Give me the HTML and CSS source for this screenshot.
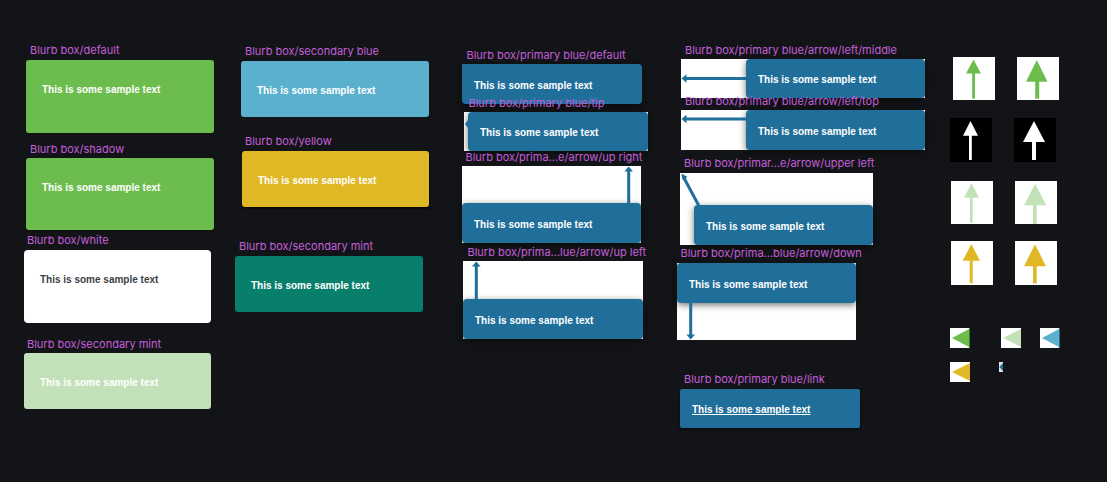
FILE: index.html
```html
<!DOCTYPE html>
<html>
<head>
<meta charset="utf-8">
<link rel="stylesheet" href="styles.css">
</head>
<body>
<div class="canvas">
  <!-- column 1 -->
  <div class="label l1">Blurb box/default</div>
  <div class="blurb green b-default"><span class="txt">This is some sample text</span></div>
  <div class="label l2">Blurb box/shadow</div>
  <div class="blurb green shadowed b-shadow"><span class="txt">This is some sample text</span></div>
  <div class="label l3">Blurb box/white</div>
  <div class="blurb white b-white"><span class="txt">This is some sample text</span></div>
  <div class="label l4">Blurb box/secondary mint</div>
  <div class="blurb lightmint b-lmint"><span class="txt">This is some sample text</span></div>

  <!-- column 2 -->
  <div class="label l5">Blurb box/secondary blue</div>
  <div class="blurb secblue b-secblue"><span class="txt">This is some sample text</span></div>
  <div class="label l6">Blurb box/yellow</div>
  <div class="blurb yellow b-yellow"><span class="txt">This is some sample text</span></div>
  <div class="label l7">Blurb box/secondary mint</div>
  <div class="blurb darkmint b-dmint"><span class="txt">This is some sample text</span></div>

  <!-- column 3 -->
  <div class="pb b-pdefault"><span class="txt">This is some sample text</span></div>
  <div class="label l8">Blurb box/primary blue/default</div>

  <div class="frame tipframe f-tip">
    <div class="pb pb-fill tipbox"><span class="tipmark"></span><span class="txt">This is some sample text</span></div>
  </div>
  <div class="label l9">Blurb box/primary blue/tip</div>

  <div class="label l10">Blurb box/prima...e/arrow/up right</div>
  <div class="frame col-end f-upright">
    <svg class="arrow" width="179" height="77" viewBox="0 0 179 77"><line x1="166.7" y1="40" x2="166.7" y2="4" stroke="#1f6f9a" stroke-width="3"/><polygon points="166.7,0.5 171,5.5 162.4,5.5" fill="#1f6f9a"/></svg>
    <div class="pb"><span class="txt">This is some sample text</span></div>
  </div>

  <div class="label l11">Blurb box/prima...lue/arrow/up left</div>
  <div class="frame col-end f-upleft">
    <svg class="arrow" width="180" height="78" viewBox="0 0 180 78"><line x1="13.3" y1="40" x2="13.3" y2="4" stroke="#1f6f9a" stroke-width="3"/><polygon points="13.3,0.5 17.6,5.5 9,5.5" fill="#1f6f9a"/></svg>
    <div class="pb"><span class="txt">This is some sample text</span></div>
  </div>

  <!-- column 4 -->
  <div class="label l12">Blurb box/primary blue/arrow/left/middle</div>
  <div class="frame row-end f-lmid">
    <svg class="arrow" width="244" height="39" viewBox="0 0 244 39"><line x1="4" y1="19.5" x2="66" y2="19.5" stroke="#1f6f9a" stroke-width="3"/><polygon points="0.5,19.5 5.5,15.2 5.5,23.8" fill="#1f6f9a"/></svg>
    <div class="pb pb-side"><span class="txt">This is some sample text</span></div>
  </div>
  <div class="label l13">Blurb box/primary blue/arrow/left/top</div>
  <div class="frame row-end f-ltop">
    <svg class="arrow" width="244" height="40" viewBox="0 0 244 40"><line x1="4" y1="9" x2="66" y2="9" stroke="#1f6f9a" stroke-width="3"/><polygon points="0.5,9 5.5,4.7 5.5,13.3" fill="#1f6f9a"/></svg>
    <div class="pb pb-side"><span class="txt">This is some sample text</span></div>
  </div>

  <div class="label l14">Blurb box/primar...e/arrow/upper left</div>
  <div class="frame col-end f-upperleft">
    <svg class="arrow" width="193" height="72" viewBox="0 0 193 72"><line x1="19" y1="33" x2="4" y2="5" stroke="#1f6f9a" stroke-width="3"/><polygon points="1.5,0.5 7.5,4 2.5,7" fill="#1f6f9a"/></svg>
    <div class="pb pb-upper"><span class="txt">This is some sample text</span></div>
  </div>

  <div class="label l15">Blurb box/prima...blue/arrow/down</div>
  <div class="frame col-start f-down">
    <svg class="arrow" width="179" height="77" viewBox="0 0 179 77"><line x1="13.7" y1="38" x2="13.7" y2="72" stroke="#1f6f9a" stroke-width="3"/><polygon points="13.7,76.5 18,71.5 9.4,71.5" fill="#1f6f9a"/></svg>
    <div class="pb"><span class="txt">This is some sample text</span></div>
  </div>

  <div class="label l16">Blurb box/primary blue/link</div>
  <div class="pb b-link"><a class="txt link">This is some sample text</a></div>

  <!-- column 5 : arrows -->
  <div class="icon white-bg i1"><svg viewBox="0 0 42 43"><polygon points="20.5,2.5 28,16.5 13,16.5" fill="#6cbd4e"/><rect x="19.2" y="16" width="2.8" height="25.7" fill="#6cbd4e"/></svg></div>
  <div class="icon white-bg i2"><svg viewBox="0 0 42 43"><polygon points="19.8,3 30.5,24.7 9,24.7" fill="#6cbd4e"/><rect x="18.2" y="24" width="4" height="17.7" fill="#6cbd4e"/></svg></div>
  <div class="icon black-bg i3"><svg viewBox="0 0 42 44"><polygon points="20.5,3 28,17.7 13,17.7" fill="#ffffff"/><rect x="19" y="17" width="2.8" height="25" fill="#ffffff"/></svg></div>
  <div class="icon black-bg i4"><svg viewBox="0 0 42 44"><polygon points="20,3 31,24 9,24" fill="#ffffff"/><rect x="18" y="23.5" width="4" height="18.5" fill="#ffffff"/></svg></div>
  <div class="icon white-bg i5"><svg viewBox="0 0 42 43"><polygon points="20.5,2.3 28,16.7 13,16.7" fill="#c3e1b9"/><rect x="19" y="16" width="2.7" height="25.7" fill="#c3e1b9"/></svg></div>
  <div class="icon white-bg i6"><svg viewBox="0 0 42 43"><polygon points="20.1,3 31.3,24.3 9,24.3" fill="#c3e1b9"/><rect x="18" y="24" width="3.7" height="19" fill="#c3e1b9"/></svg></div>
  <div class="icon white-bg i7"><svg viewBox="0 0 42 44"><polygon points="20.3,3 29,19.7 11.7,19.7" fill="#e0b826"/><rect x="18.7" y="19" width="3" height="23.3" fill="#e0b826"/></svg></div>
  <div class="icon white-bg i8"><svg viewBox="0 0 42 44"><polygon points="20,3.3 31,25.3 9,25.3" fill="#e0b826"/><rect x="18" y="25" width="3.7" height="17.3" fill="#e0b826"/></svg></div>

  <div class="tri t1"><svg viewBox="0 0 20 20"><polygon points="2,10 19,1 19,19" fill="#6cbd4e"/><rect x="19" y="0" width="1" height="20" fill="#3f7f2c"/></svg></div>
  <div class="tri t2"><svg viewBox="0 0 20 20"><polygon points="2,10 20,1 20,19" fill="#c3e1b9"/></svg></div>
  <div class="tri t3"><svg viewBox="0 0 20 20"><polygon points="2,10 19,1 19,19" fill="#5bb0cd"/><rect x="19" y="0" width="1" height="20" fill="#2f6f85"/></svg></div>
  <div class="tri t4"><svg viewBox="0 0 20 20"><polygon points="2,10 20,1 20,19" fill="#e0b826"/></svg></div>
  <div class="tiny"><svg viewBox="0 0 4 10"><polygon points="0.3,5 4,1 4,9" fill="#1f6f9a"/></svg></div>
</div>
</body>
</html>
```

FILE: styles.css
```css
html, body {
  margin: 0;
  padding: 0;
  background: #131417;
}

.canvas {
  position: relative;
  width: 1107px;
  height: 482px;
  overflow: hidden;
  background: #131417;
}

.label {
  position: absolute;
  font-family: Inter, "Noto Sans", sans-serif;
  font-size: 11px;
  line-height: 13px;
  color: #c45fda;
  white-space: nowrap;
  z-index: 3;
}

.txt {
  font-family: "Liberation Sans", Arial, sans-serif;
  font-weight: bold;
  font-size: 10px;
  line-height: 12px;
  color: #ffffff;
  white-space: nowrap;
}

.blurb {
  position: absolute;
  box-sizing: border-box;
  display: flex;
  align-items: flex-start;
  padding: 24px 16px 0;
  border-radius: 3px;
}

.green { background: #6cbd4e; }
.white { background: #ffffff; border-radius: 4px; }
.white .txt { color: #3a3f46; }
.lightmint { background: #c3e1b9; }
.secblue { background: #5bb0cd; }
.yellow { background: #e0b826; box-shadow: 1px 2px 2px rgba(0, 0, 0, 0.55); }
.darkmint { background: #077f6b; }
.shadowed { box-shadow: 0 1px 2px rgba(0, 0, 0, 0.35); }

.b-default { left: 26px; top: 60px; width: 188px; height: 73px; }
.b-shadow  { left: 26px; top: 158px; width: 188px; height: 72px; }
.b-white   { left: 24px; top: 250px; width: 187px; height: 73px; }
.b-lmint   { left: 24px; top: 353px; width: 187px; height: 56px; }
.b-secblue { left: 241px; top: 61px; width: 188px; height: 56px; }
.b-yellow  { left: 242px; top: 151px; width: 187px; height: 56px; }
.b-dmint   { left: 235px; top: 256px; width: 188px; height: 56px; }

/* primary blue boxes */
.pb {
  box-sizing: border-box;
  height: 40px;
  display: flex;
  align-items: center;
  padding: 3px 12px 0;
  background: #1f6f9a;
  border-radius: 4px;
  box-shadow: 0 2px 7px rgba(0, 0, 0, 0.55);
  position: relative;
  z-index: 1;
}

.b-pdefault {
  position: absolute;
  left: 462px; top: 64px; width: 180px;
  border-radius: 0 4px 4px 4px;
}
.b-link {
  position: absolute;
  left: 680px; top: 389px; width: 180px; height: 39px;
  border-radius: 2px;
  box-shadow: 0 1px 3px rgba(0, 0, 0, 0.6);
}
.link { text-decoration: underline; }

.frame {
  position: absolute;
  background: #ffffff;
  display: flex;
}
.col-end { flex-direction: column; justify-content: flex-end; }
.col-start { flex-direction: column; justify-content: flex-start; }
.row-end { flex-direction: row; justify-content: flex-end; }

.arrow {
  position: absolute;
  left: 0;
  top: 0;
  z-index: 2;
}

.f-tip { left: 464px; top: 112px; width: 184px; height: 39px; background: #ffffff; justify-content: flex-end; }
.tipbox { width: 180px; height: 39px; padding-left: 12px; }
.tipmark {
  position: absolute;
  left: -3px;
  top: 8px;
  width: 0; height: 0;
  border-top: 4px solid transparent;
  border-bottom: 4px solid transparent;
  border-right: 3px solid #1f6f9a;
}

.f-upright { left: 462px; top: 166px; width: 179px; height: 77px; }
.f-upleft  { left: 463px; top: 261px; width: 180px; height: 78px; }
.f-lmid    { left: 681px; top: 59px; width: 244px; height: 39px; }
.f-ltop    { left: 681px; top: 110px; width: 244px; height: 40px; }
.pb-side   { width: 179px; height: 100%; }
.f-upperleft { left: 680px; top: 173px; width: 193px; height: 72px; align-items: flex-end; }
.pb-upper  { width: 179px; }
.f-down    { left: 677px; top: 263px; width: 179px; height: 77px; }

.l1  { left: 30px;  top: 43.5px; }
.l2  { left: 30px;  top: 142.5px; }
.l3  { left: 27px;  top: 233.5px; }
.l4  { left: 27px;  top: 337.5px; }
.l5  { left: 245px; top: 44.5px; }
.l6  { left: 245px; top: 135px; }
.l7  { left: 239px; top: 239.5px; }
.l8  { left: 466.5px; top: 48.5px; }
.l9  { left: 468.5px; top: 97px; }
.l10 { left: 465.5px; top: 151px; }
.l11 { left: 467.5px; top: 245.5px; }
.l12 { left: 685px; top: 44px; }
.l13 { left: 685px; top: 94.5px; }
.l14 { left: 684px; top: 157px; }
.l15 { left: 680.5px; top: 246.5px; }
.l16 { left: 684px; top: 372.5px; }

/* icons */
.icon {
  position: absolute;
  width: 42px;
  height: 43px;
  display: flex;
}
.icon svg { width: 100%; height: 100%; display: block; }
.white-bg { background: #ffffff; }
.black-bg { background: #000000; height: 44px; }

.i1 { left: 953px; top: 57px; }
.i2 { left: 1017px; top: 57px; }
.i3 { left: 950px; top: 118px; }
.i4 { left: 1014px; top: 118px; }
.i5 { left: 951px; top: 181px; }
.i6 { left: 1015px; top: 181px; }
.i7 { left: 951px; top: 241px; height: 44px; }
.i8 { left: 1015px; top: 241px; height: 44px; }

.tri {
  position: absolute;
  width: 20px;
  height: 20px;
  background: #ffffff;
  display: flex;
}
.tri svg, .tiny svg { width: 100%; height: 100%; display: block; }
.t1 { left: 950px; top: 328px; }
.t2 { left: 1001px; top: 328px; }
.t3 { left: 1040px; top: 328px; }
.t4 { left: 950px; top: 362px; }
.tiny {
  position: absolute;
  left: 999px;
  top: 362px;
  width: 4px;
  height: 10px;
  background: #dfe6ea;
  display: flex;
}
```
